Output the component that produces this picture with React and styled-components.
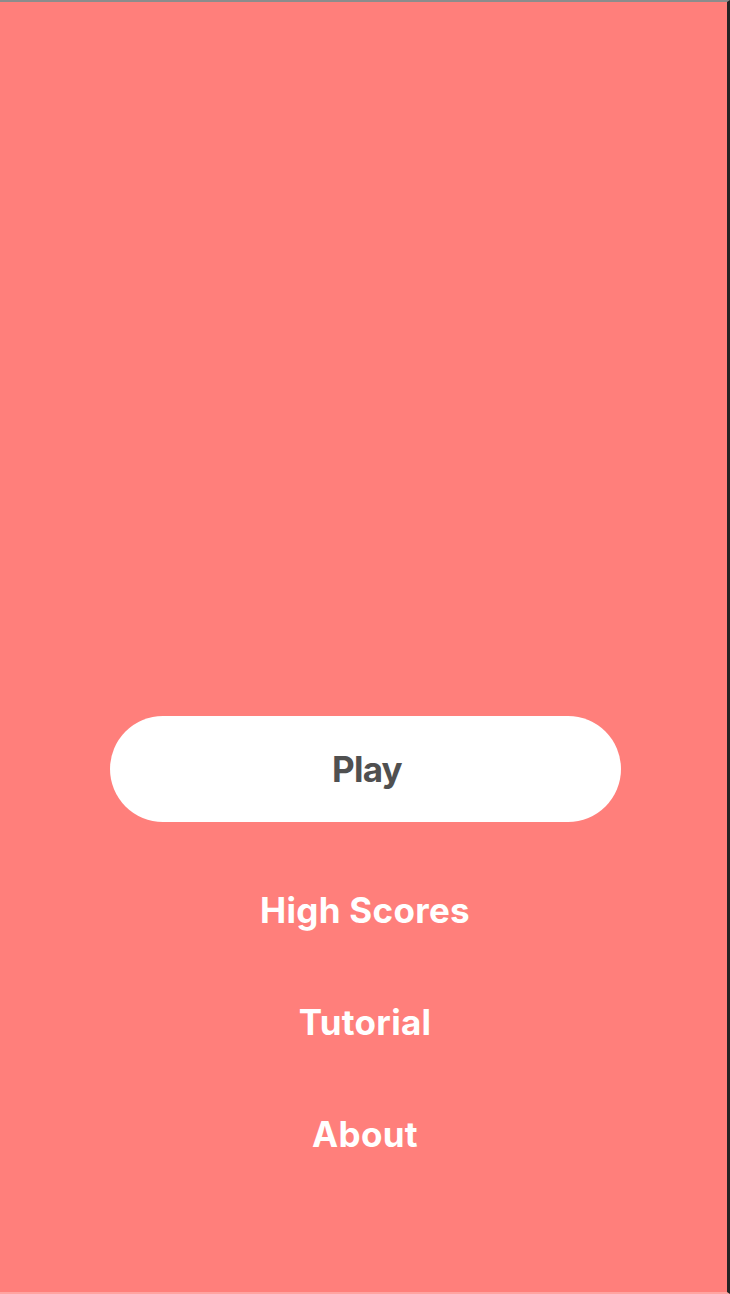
import React from 'react'
import styled, { createGlobalStyle } from 'styled-components'

const GlobalStyle = createGlobalStyle`
    html, body {
        margin: 0;
        padding: 0;
        background: #ff7f7b;
    }
    * {
        box-sizing: border-box;
    }
`

const Screen = styled.div`
    display: flex;
    flex-direction: column;
    justify-content: flex-end;
    align-items: center;
    width: 730px;
    height: 1294px;
    padding: 0 3px 102px 0;
    background: #ff7f7b;
    border-top: 2px solid #8c8c8c;
    border-right: 3px solid #242424;
    border-bottom: 2px solid #ffa4a1;
    font-family: Inter, Lato, sans-serif;
`

const Menu = styled.nav`
    display: flex;
    flex-direction: column;
    align-items: center;
    width: 100%;
`

const PlayButton = styled.button`
    width: 511px;
    height: 106px;
    margin-left: 6px;
    padding: 0 0 0 4px;
    border: none;
    border-radius: 53px;
    background: #ffffff;
    color: #505050;
    font-family: inherit;
    font-size: 35px;
    font-weight: 700;
    letter-spacing: -0.8px;
    cursor: pointer;
`

const MenuItem = styled.button`
    display: flex;
    align-items: center;
    justify-content: center;
    height: 112px;
    margin-top: ${(p) => (p.first ? '32px' : '0')};
    margin-left: 6px;
    padding: 0 40px;
    border: none;
    background: transparent;
    color: #ffffff;
    font-family: inherit;
    font-size: 35px;
    font-weight: 700;
    letter-spacing: 0.3px;
    cursor: pointer;
`

const items = ['High Scores', 'Tutorial', 'About']

export default function App() {
    return (
        <>
            <GlobalStyle />
            <Screen>
                <Menu>
                    <PlayButton>Play</PlayButton>
                    {items.map((label, i) => (
                        <MenuItem key={label} first={i === 0}>
                            {label}
                        </MenuItem>
                    ))}
                </Menu>
            </Screen>
        </>
    )
}
